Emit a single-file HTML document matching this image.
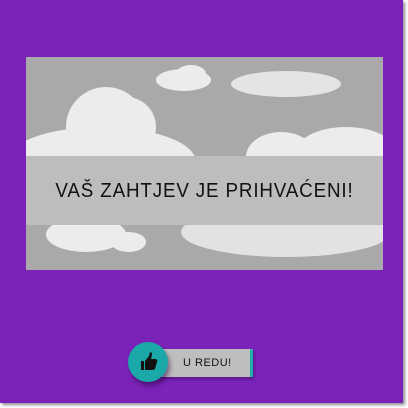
<!DOCTYPE html>
<html><head><style>
body{margin:0;width:408px;height:408px;background:#fff;position:relative;overflow:hidden;font-family:"Liberation Sans",sans-serif}
#f{position:absolute;left:0;top:0;width:403px;height:403px;background:#7b23b9;box-shadow:2px 2px 3px rgba(0,0,0,.45)}
#img{position:absolute;left:26px;top:57px;width:357px;height:213px;background:#a9a9a9;overflow:hidden}
.c{position:absolute;background:#ececec;border-radius:50%}
#band{position:absolute;left:0;top:99px;width:357px;height:69px;background:#bcbdbc}
#t{position:absolute;left:0;top:123px;width:357px;text-align:center;font-size:20px;letter-spacing:0.9px;color:#111;transform:scaleX(0.94)}
#btn{position:absolute;left:158px;top:349px;width:92px;height:28px;background:#bebebe;border-right:3px solid #1fb0aa;box-shadow:1px 2px 3px rgba(0,0,0,.3)}
#btn span{position:absolute;left:25px;top:8px;font-size:11px;letter-spacing:.5px;color:#111}
#cir{position:absolute;left:128px;top:342px;width:40px;height:40px;border-radius:50%;background:#1aa9a8;box-shadow:2px 4px 5px rgba(40,0,60,.5)}
</style></head><body>
<div id="f"></div>
<div id="img">
<div class="c" style="left:130px;top:12px;width:55px;height:22px"></div>
<div class="c" style="left:150px;top:8px;width:30px;height:18px"></div>
<div class="c" style="left:205px;top:14px;width:110px;height:26px;background:#e4e4e4"></div>
<div class="c" style="left:40px;top:30px;width:80px;height:80px"></div>
<div class="c" style="left:70px;top:40px;width:60px;height:60px"></div>
<div class="c" style="left:-20px;top:70px;width:190px;height:70px"></div>
<div class="c" style="left:220px;top:75px;width:70px;height:50px"></div>
<div class="c" style="left:270px;top:70px;width:100px;height:50px"></div>
<div class="c" style="left:20px;top:160px;width:80px;height:35px"></div>
<div class="c" style="left:85px;top:175px;width:35px;height:20px"></div>
<div class="c" style="left:155px;top:150px;width:210px;height:50px;background:#e2e2e2"></div>
<div id="band"></div>
<div id="t">VAŠ ZAHTJEV JE PRIHVAĆENI!</div>
</div>
<div id="btn"><span>U REDU!</span></div>
<div id="cir"><svg width="40" height="40" viewBox="0 0 40 40"><rect x="13" y="19" width="3" height="9" fill="#111"/><path d="M17 19 L21 14 L22 10 Q24 10 24 13 L23 17 L28 17 Q30 18 29 20 L27 27 Q26 28 24 28 L17 28 Z" fill="#111"/></svg></div>
</body></html>
